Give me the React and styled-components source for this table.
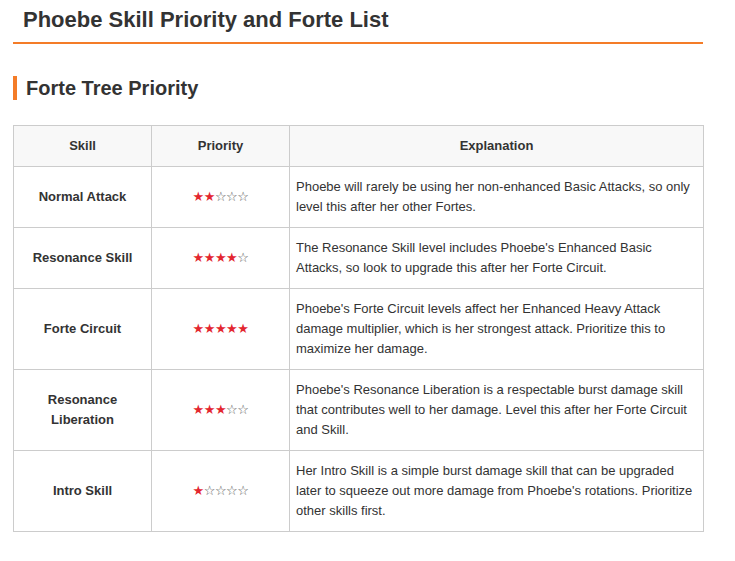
import styled, { createGlobalStyle } from 'styled-components';

const GlobalStyle = createGlobalStyle`
  body {
    margin: 0;
    background: #ffffff;
    font-family: 'Liberation Sans', Arial, sans-serif;
    color: #333333;
  }
`;

const Page = styled.div`
  width: 690px;
  padding: 0 13px;
`;

const Title = styled.h2`
  margin: 0;
  padding: 6px 10px 8px;
  font-size: 22px;
  line-height: 28px;
  font-weight: 700;
  color: #333333;
  border-bottom: 2px solid #f47c28;
`;

const Section = styled.h3`
  margin: 32px 0 25px;
  padding-left: 9px;
  border-left: 4px solid #f47c28;
  font-size: 20px;
  line-height: 24px;
  font-weight: 700;
  color: #333333;
`;

const Table = styled.table`
  width: 691px;
  border-collapse: collapse;
  table-layout: fixed;
  font-size: 13px;
  line-height: 20px;
`;

const Head = styled.th`
  background: #f8f8f8;
  border: 1px solid #cccccc;
  padding: 10px;
  font-weight: 700;
  text-align: center;
  color: #333333;
`;

const Cell = styled.td`
  border: 1px solid #cccccc;
  padding: 10px 6px;
  color: #333333;
  text-align: ${(p) => (p.$left ? 'left' : 'center')};
  font-weight: ${(p) => (p.$bold ? 700 : 400)};
  vertical-align: middle;
`;

const Stars = styled.span`
  font-family: 'DejaVu Sans', sans-serif;
  font-size: 13px;
  letter-spacing: -0.5px;
`;

const Star = styled.span`
  color: ${(p) => (p.$on ? '#e3262f' : '#555555')};
`;

const rows = [
  {
    skill: 'Normal Attack',
    rank: 2,
    text: 'Phoebe will rarely be using her non-enhanced Basic Attacks, so only level this after her other Fortes.',
  },
  {
    skill: 'Resonance Skill',
    rank: 4,
    text: "The Resonance Skill level includes Phoebe's Enhanced Basic Attacks, so look to upgrade this after her Forte Circuit.",
  },
  {
    skill: 'Forte Circuit',
    rank: 5,
    text: "Phoebe's Forte Circuit levels affect her Enhanced Heavy Attack damage multiplier, which is her strongest attack. Prioritize this to maximize her damage.",
  },
  {
    skill: 'Resonance Liberation',
    rank: 3,
    text: "Phoebe's Resonance Liberation is a respectable burst damage skill that contributes well to her damage. Level this after her Forte Circuit and Skill.",
  },
  {
    skill: 'Intro Skill',
    rank: 1,
    text: "Her Intro Skill is a simple burst damage skill that can be upgraded later to squeeze out more damage from Phoebe's rotations. Prioritize other skills first.",
  },
];

function Rating({ value }) {
  return (
    <Stars>
      {[1, 2, 3, 4, 5].map((i) => (
        <Star key={i} $on={i <= value}>
          {i <= value ? '★' : '☆'}
        </Star>
      ))}
    </Stars>
  );
}

export default function App() {
  return (
    <Page>
      <GlobalStyle />
      <Title>Phoebe Skill Priority and Forte List</Title>
      <Section>Forte Tree Priority</Section>
      <Table>
        <colgroup>
          <col style={{ width: '138px' }} />
          <col style={{ width: '138px' }} />
          <col />
        </colgroup>
        <thead>
          <tr>
            <Head>Skill</Head>
            <Head>Priority</Head>
            <Head>Explanation</Head>
          </tr>
        </thead>
        <tbody>
          {rows.map((r) => (
            <tr key={r.skill}>
              <Cell $bold>{r.skill}</Cell>
              <Cell>
                <Rating value={r.rank} />
              </Cell>
              <Cell $left>{r.text}</Cell>
            </tr>
          ))}
        </tbody>
      </Table>
    </Page>
  );
}
